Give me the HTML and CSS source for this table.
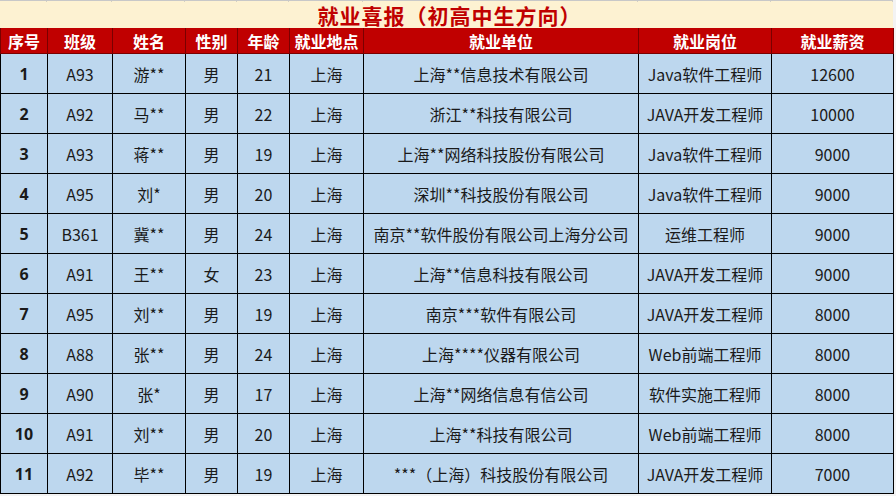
FILE: index.html
```html
<!DOCTYPE html>
<html lang="zh">
<head>
<meta charset="utf-8">
<link rel="stylesheet" href="styles.css">
</head>
<body>
<div class="sheet">
  <div class="gridtop">
    <span style="width:47px"></span><span style="width:65px"></span><span style="width:73px"></span><span style="width:52px"></span><span style="width:52px"></span><span style="width:74px"></span><span style="width:275px"></span><span style="width:133px"></span><span style="width:122px"></span>
  </div>
  <div class="title"><span class="title-text">就业喜报（初高中生方向）</span></div>
  <table class="report">
    <colgroup>
      <col style="width:47px"><col style="width:65px"><col style="width:73px"><col style="width:52px"><col style="width:52px"><col style="width:74px"><col style="width:275px"><col style="width:133px"><col style="width:122px">
    </colgroup>
    <thead>
      <tr><th>序号</th><th>班级</th><th>姓名</th><th>性别</th><th>年龄</th><th>就业地点</th><th>就业单位</th><th>就业岗位</th><th>就业薪资</th></tr>
    </thead>
    <tbody>
      <tr><td class="no">1</td><td>A93</td><td>游**</td><td>男</td><td>21</td><td>上海</td><td>上海**信息技术有限公司</td><td>Java软件工程师</td><td>12600</td></tr>
      <tr><td class="no">2</td><td>A92</td><td>马**</td><td>男</td><td>22</td><td>上海</td><td>浙江**科技有限公司</td><td>JAVA开发工程师</td><td>10000</td></tr>
      <tr><td class="no">3</td><td>A93</td><td>蒋**</td><td>男</td><td>19</td><td>上海</td><td>上海**网络科技股份有限公司</td><td>Java软件工程师</td><td>9000</td></tr>
      <tr><td class="no">4</td><td>A95</td><td>刘*</td><td>男</td><td>20</td><td>上海</td><td>深圳**科技股份有限公司</td><td>Java软件工程师</td><td>9000</td></tr>
      <tr><td class="no">5</td><td>B361</td><td>冀**</td><td>男</td><td>24</td><td>上海</td><td>南京**软件股份有限公司上海分公司</td><td>运维工程师</td><td>9000</td></tr>
      <tr><td class="no">6</td><td>A91</td><td>王**</td><td>女</td><td>23</td><td>上海</td><td>上海**信息科技有限公司</td><td>JAVA开发工程师</td><td>9000</td></tr>
      <tr><td class="no">7</td><td>A95</td><td>刘**</td><td>男</td><td>19</td><td>上海</td><td>南京***软件有限公司</td><td>JAVA开发工程师</td><td>8000</td></tr>
      <tr><td class="no">8</td><td>A88</td><td>张**</td><td>男</td><td>24</td><td>上海</td><td>上海****仪器有限公司</td><td>Web前端工程师</td><td>8000</td></tr>
      <tr><td class="no">9</td><td>A90</td><td>张*</td><td>男</td><td>17</td><td>上海</td><td>上海**网络信息有信公司</td><td>软件实施工程师</td><td>8000</td></tr>
      <tr><td class="no">10</td><td>A91</td><td>刘**</td><td>男</td><td>20</td><td>上海</td><td>上海**科技有限公司</td><td>Web前端工程师</td><td>8000</td></tr>
      <tr><td class="no">11</td><td>A92</td><td>毕**</td><td>男</td><td>19</td><td>上海</td><td>***（上海）科技股份有限公司</td><td>JAVA开发工程师</td><td>7000</td></tr>
    </tbody>
  </table>
</div>
</body>
</html>
```
FILE: styles.css
```css
html, body {
  margin: 0;
  padding: 0;
  background: #f3f3f3;
}
body {
  font-family: "Noto Sans CJK SC", "Noto Sans", sans-serif;
  width: 896px;
  height: 496px;
  overflow: hidden;
}
.sheet {
  width: 893px;
}
.gridtop {
  display: flex;
  height: 1px;
  border-top: 1px solid #c8c8c8;
  background: #fdf2d2;
}
.gridtop span {
  box-sizing: border-box;
  border-right: 1px solid #d4d0c4;
  height: 1px;
}
.title {
  height: 26px;
  display: flex;
  align-items: center;
  justify-content: center;
  background: #fdf2d2;
  padding-left: 6px;
}
.title-text {
  color: #c00000;
  font-size: 21px;
  line-height: 24px;
  font-weight: 700;
  letter-spacing: 1px;
}
.report {
  border-collapse: collapse;
  table-layout: fixed;
  width: 893px;
}
.report th {
  background: #c00000;
  color: #ffffff;
  font-size: 16px;
  font-weight: 700;
  height: 25px;
  padding: 0;
  line-height: 20px;
  border: 1px solid #7a0000;
  border-top: none;
}
.report td {
  background: #bdd7ee;
  color: #1a1a1a;
  font-size: 16px;
  text-align: center;
  height: 39px;
  padding: 0;
  border: 1px solid #000000;
  white-space: nowrap;
}
.report td.no {
  font-weight: 700;
  font-family: "Open Sans", "Noto Sans", sans-serif;
}
.report tbody tr:first-child td {
  border-top: 1px solid #000000;
}
```
